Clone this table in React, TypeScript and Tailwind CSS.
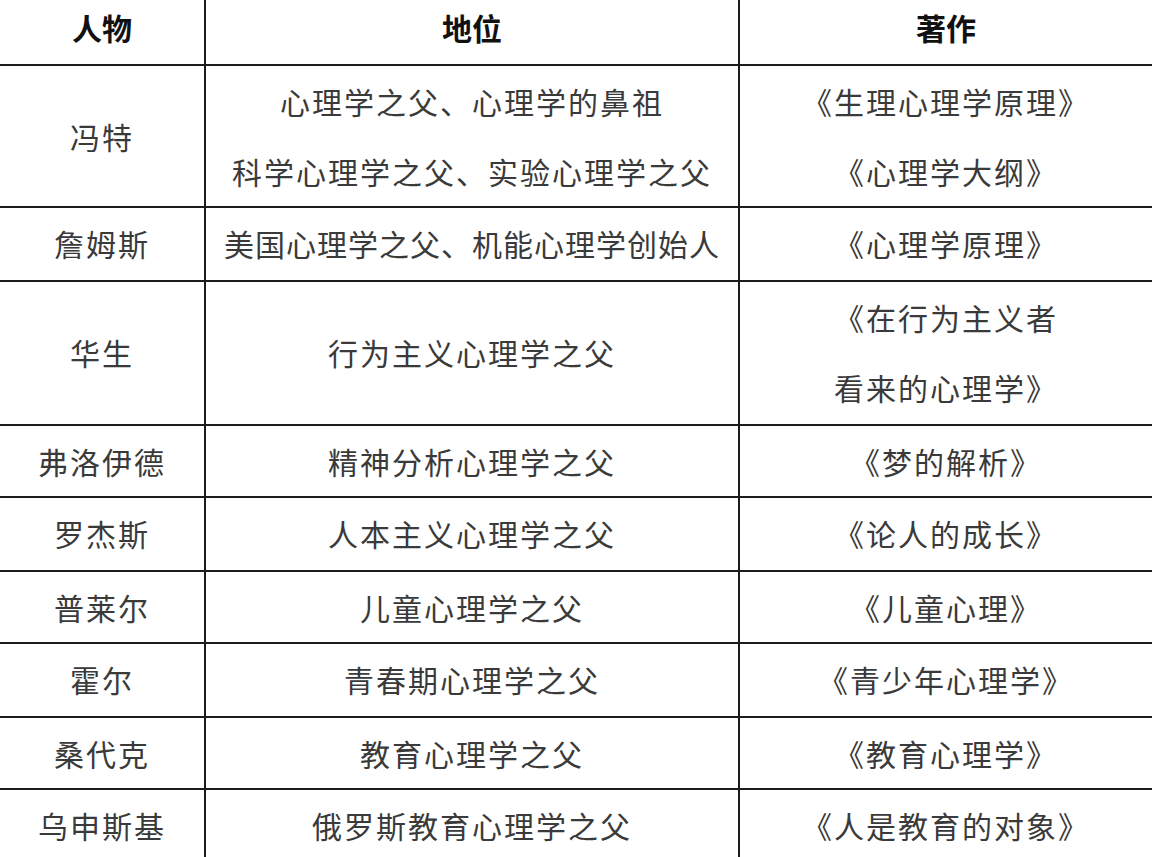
import React from "react";

type Row = { h: number; name: string; pos: string[]; works: string[]; tight?: boolean };

const rows: Row[] = [
  { h: 142, name: "冯特", pos: ["心理学之父、心理学的鼻祖", "科学心理学之父、实验心理学之父"], works: ["《生理心理学原理》", "《心理学大纲》"] },
  { h: 74, name: "詹姆斯", pos: ["美国心理学之父、机能心理学创始人"], works: ["《心理学原理》"], tight: true },
  { h: 144, name: "华生", pos: ["行为主义心理学之父"], works: ["《在行为主义者", "看来的心理学》"] },
  { h: 72, name: "弗洛伊德", pos: ["精神分析心理学之父"], works: ["《梦的解析》"] },
  { h: 74, name: "罗杰斯", pos: ["人本主义心理学之父"], works: ["《论人的成长》"] },
  { h: 72, name: "普莱尔", pos: ["儿童心理学之父"], works: ["《儿童心理》"] },
  { h: 74, name: "霍尔", pos: ["青春期心理学之父"], works: ["《青少年心理学》"] },
  { h: 72, name: "桑代克", pos: ["教育心理学之父"], works: ["《教育心理学》"] },
  { h: 72, name: "乌申斯基", pos: ["俄罗斯教育心理学之父"], works: ["《人是教育的对象》"] },
];

const font = {
  fontFamily: '"Noto Sans CJK SC", "Liberation Serif", serif',
};

function Cell({ lines, right, tight }: { lines: string[]; right?: boolean; tight?: boolean }) {
  return (
    <div
      className={`flex flex-col items-center justify-center h-full pb-[3px] text-[30px] leading-[70px] text-[#3a3a3a] ${
        right ? "" : "border-r-2 border-[#1c1c1c]"
      } ${tight ? "tracking-[1px]" : "tracking-[2px]"}`}
    >
      {lines.map((l, i) => (
        <div key={i} className="whitespace-nowrap">
          {l}
        </div>
      ))}
    </div>
  );
}

export default function App() {
  return (
    <div className="w-[1152px] h-[857px] overflow-hidden bg-white" style={font}>
      <div className="grid grid-cols-[206px_534px_412px] h-[66px] border-b-2 border-[#1c1c1c]">
        <div className="flex items-center justify-center pb-[10px] border-r-2 border-[#1c1c1c] text-[30px] font-bold text-[#111]">人物</div>
        <div className="flex items-center justify-center pb-[10px] border-r-2 border-[#1c1c1c] text-[30px] font-bold text-[#111]">地位</div>
        <div className="flex items-center justify-center pb-[10px] text-[30px] font-bold text-[#111]">著作</div>
      </div>
      {rows.map((r, i) => (
        <div
          key={i}
          className="grid grid-cols-[206px_534px_412px] border-b-2 border-[#1c1c1c]"
          style={{ height: r.h }}
        >
          <Cell lines={[r.name]} />
          <Cell lines={r.pos} tight={r.tight} />
          <Cell lines={r.works} right />
        </div>
      ))}
    </div>
  );
}
